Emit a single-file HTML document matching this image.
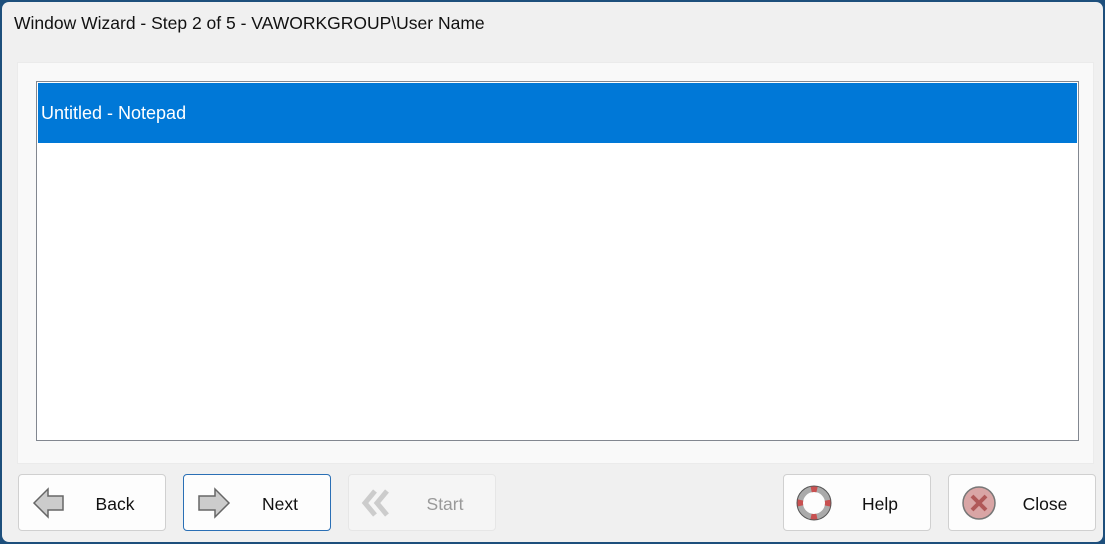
<!DOCTYPE html>
<html><head><style>
body{margin:0;width:1105px;height:544px;overflow:hidden;background:#1d4f7c;font-family:"Liberation Sans",sans-serif;}
.win{position:absolute;left:2px;top:2px;width:1101px;height:540px;background:#f0f0f0;border-radius:7px;overflow:hidden}
.title{position:absolute;left:12px;top:11px;font-size:17.5px;color:#111}
.panel{position:absolute;left:15px;top:60px;width:1077px;height:402px;background:#f9f9f9;border:1px solid #ebebeb;box-sizing:border-box}
.list{position:absolute;left:34px;top:79px;width:1043px;height:360px;background:#fff;border:1px solid #828790;box-sizing:border-box}
.sel{position:absolute;left:1px;top:1px;right:1px;height:60px;background:#0078d7;color:#fff;font-size:18px;line-height:60px;padding-left:3px}
.btn{position:absolute;top:472px;width:148px;height:57px;background:#fdfdfd;border:1px solid #d0d0d0;border-radius:4px;box-sizing:border-box;font-size:17.5px;color:#111}
.btn span{position:absolute;left:0;right:0;top:19px;text-align:center;padding-left:46px;box-sizing:border-box}
.btn svg{position:absolute;left:12px;top:10px}
</style></head><body><div class="win">
<div class="title">Window Wizard - Step 2 of 5 - VAWORKGROUP\User Name</div>
<div class="panel"></div>
<div class="list"><div class="sel">Untitled - Notepad</div></div>
<div class="btn" style="left:16px"><svg width="36" height="36"><path d="M3 18 L17 4 L17 11 L32 11 L32 25 L17 25 L17 32 Z" fill="#ccc" stroke="#666" stroke-width="1.5"/></svg><span>Back</span></div>
<div class="btn" style="left:181px;border-color:#2a6fb5"><svg width="36" height="36"><path d="M33 18 L19 4 L19 11 L3 11 L3 25 L19 25 L19 32 Z" fill="#ccc" stroke="#666" stroke-width="1.5"/></svg><span>Next</span></div>
<div class="btn" style="left:346px;background:#f5f5f5;border-color:#e6e6e6;color:#999"><svg width="36" height="36"><path d="M14 6 L4 18 L14 30 M26 6 L16 18 L26 30" fill="none" stroke="#ccc" stroke-width="5"/></svg><span>Start</span></div>
<div class="btn" style="left:781px"><svg width="36" height="36"><circle cx="18" cy="18" r="14" fill="none" stroke="#aaa" stroke-width="6"/><circle cx="18" cy="18" r="14" fill="none" stroke="#c85050" stroke-width="6" stroke-dasharray="6 16" stroke-dashoffset="3"/><circle cx="18" cy="18" r="17" fill="none" stroke="#555" stroke-width="1"/></svg><span>Help</span></div>
<div class="btn" style="left:946px"><svg width="36" height="36"><circle cx="18" cy="18" r="16" fill="#d9a5a5" stroke="#777" stroke-width="1.5"/><path d="M11 11 L25 25 M25 11 L11 25" stroke="#b05858" stroke-width="4"/></svg><span>Close</span></div>
</div></body></html>
